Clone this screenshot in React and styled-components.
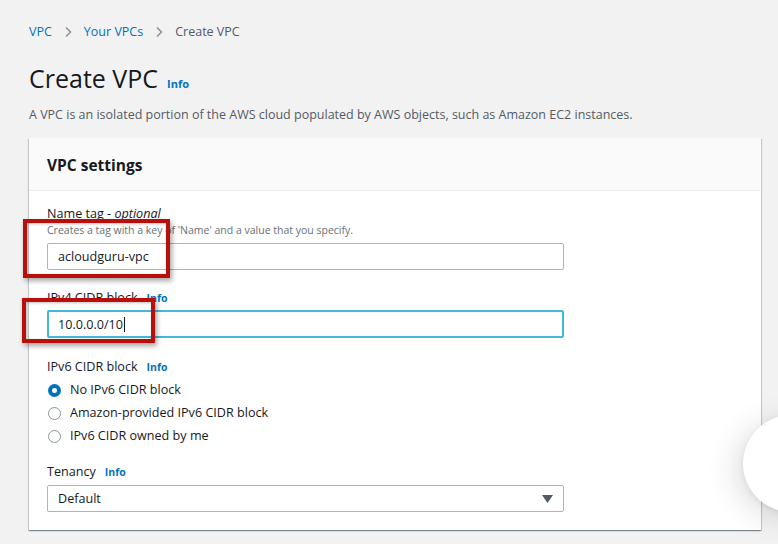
import React from "react";
import styled, { createGlobalStyle } from "styled-components";

const Global = createGlobalStyle`
  html, body { margin: 0; padding: 0; background: #f2f2f2; }
  body { font-family: "Open Sans", "Noto Sans", sans-serif; color: #16191f; overflow: hidden; }
  * { box-sizing: border-box; }
`;

const Page = styled.div`
  position: relative;
  width: 778px;
  height: 544px;
  padding: 23px 17px 0 29px;
  overflow: hidden;
`;

const Crumbs = styled.nav`
  display: flex;
  align-items: center;
  gap: 11px;
  font-size: 12.5px;
  line-height: 18px;
`;

const CrumbLink = styled.span`
  color: #0073bb;
`;

const CrumbCurrent = styled.span`
  color: #545b64;
`;

const Chevron = styled.svg`
  width: 10px;
  height: 12px;
`;

const TitleRow = styled.div`
  display: flex;
  align-items: baseline;
  gap: 9px;
  margin-top: 20px;
`;

const Title = styled.h1`
  margin: 0;
  font-size: 25px;
  font-weight: 400;
  line-height: 34px;
  color: #16191f;
`;

const Info = styled.span`
  color: #0073bb;
  font-weight: 700;
  font-size: ${(p) => p.size || 11}px;
`;

const Desc = styled.p`
  margin: 11px 0 0;
  font-size: 12.5px;
  line-height: 18px;
  color: #545b64;
`;

const Card = styled.section`
  margin-top: 14px;
  background: #fff;
  box-shadow: 0 1px 1px 0 rgba(0, 28, 36, 0.3), 1px 1px 1px 0 rgba(0, 28, 36, 0.15),
    -1px 1px 1px 0 rgba(0, 28, 36, 0.15);
  height: 392px;
`;

const CardHeader = styled.header`
  height: 53px;
  padding: 0 18px;
  display: flex;
  align-items: center;
  background: #fafafa;
  border-bottom: 1px solid #eaeded;
`;

const CardTitle = styled.h2`
  margin: 0;
  font-size: 15.5px;
  font-weight: 700;
  color: #16191f;
  padding-top: 1px;
`;

const CardBody = styled.div`
  padding: 14px 18px 0;
  width: 553px;
`;

const Field = styled.div`
  display: flex;
  flex-direction: column;
  margin-bottom: ${(p) => p.mb || 0}px;
`;

const Label = styled.div`
  display: flex;
  align-items: baseline;
  gap: 9px;
  font-size: 12.6px;
  line-height: 18px;
  color: #16191f;
  em { font-style: italic; }
`;

const Hint = styled.div`
  font-size: 10.5px;
  line-height: 13px;
  color: #687078;
  margin-top: 1px;
`;

const Input = styled.div`
  margin-top: ${(p) => p.mt || 4}px;
  height: ${(p) => (p.focus ? 28 : 27)}px;
  border: ${(p) => (p.focus ? "2px solid #44b9d6" : "1px solid #aab7b8")};
  border-radius: 2px;
  padding: 0 ${(p) => (p.focus ? 9 : 10)}px;
  display: flex;
  align-items: center;
  font-size: 12.6px;
  color: #16191f;
  background: #fff;
`;

const Caret = styled.span`
  display: inline-block;
  width: 1px;
  height: 15px;
  background: #16191f;
  margin-left: 1px;
`;

const Radios = styled.div`
  display: flex;
  flex-direction: column;
  gap: 5px;
  margin-top: 5px;
`;

const RadioRow = styled.label`
  display: flex;
  align-items: center;
  gap: 9px;
  font-size: 12.6px;
  line-height: 18px;
  color: #16191f;
  padding-left: 1px;
`;

const RadioDot = styled.span`
  width: 13px;
  height: 13px;
  border-radius: 50%;
  border: ${(p) => (p.checked ? "4px solid #0073bb" : "1px solid #879596")};
  background: #fff;
  flex: none;
`;

const Select = styled(Input)`
  justify-content: space-between;
  padding-right: 10px;
`;

const Tri = styled.svg`
  width: 11px;
  height: 8px;
`;

const Highlight = styled.div`
  position: absolute;
  left: ${(p) => p.x}px;
  top: ${(p) => p.y}px;
  width: ${(p) => p.w}px;
  height: ${(p) => p.h}px;
  border: 4px solid #b80f0a;
  box-shadow: 2px 3px 5px rgba(0, 0, 0, 0.35), inset 1px 1px 3px rgba(0, 0, 0, 0.25);
  pointer-events: none;
`;

const Bubble = styled.div`
  position: absolute;
  left: 743px;
  top: 415px;
  width: 97px;
  height: 97px;
  border-radius: 50%;
  background: #fff;
  box-shadow: -8px 6px 30px rgba(0, 0, 0, 0.12), 0 2px 6px rgba(0, 0, 0, 0.08);
`;

const ChevronIcon = () => (
  <Chevron viewBox="0 0 10 12">
    <path d="M3 1.5 L7.5 6 L3 10.5" fill="none" stroke="#879596" strokeWidth="1.5" />
  </Chevron>
);

export default function App() {
  return (
    <>
      <Global />
      <Page>
        <Crumbs>
          <CrumbLink>VPC</CrumbLink>
          <ChevronIcon />
          <CrumbLink>Your VPCs</CrumbLink>
          <ChevronIcon />
          <CrumbCurrent>Create VPC</CrumbCurrent>
        </Crumbs>
        <TitleRow>
          <Title>Create VPC</Title>
          <Info>Info</Info>
        </TitleRow>
        <Desc>
          A VPC is an isolated portion of the AWS cloud populated by AWS objects, such as Amazon EC2
          instances.
        </Desc>
        <Card>
          <CardHeader>
            <CardTitle>VPC settings</CardTitle>
          </CardHeader>
          <CardBody>
            <Field mb={19}>
              <Label>
                <span>
                  Name tag - <em>optional</em>
                </span>
              </Label>
              <Hint>Creates a tag with a key of 'Name' and a value that you specify.</Hint>
              <Input mt={6}>acloudguru-vpc</Input>
            </Field>
            <Field mb={20}>
              <Label>
                <span>IPv4 CIDR block</span>
                <Info size={10.5}>Info</Info>
              </Label>
              <Input focus mt={3}>
                10.0.0.0/10
                <Caret />
              </Input>
            </Field>
            <Field mb={18}>
              <Label>
                <span>IPv6 CIDR block</span>
                <Info size={10.5}>Info</Info>
              </Label>
              <Radios>
                <RadioRow>
                  <RadioDot checked />
                  No IPv6 CIDR block
                </RadioRow>
                <RadioRow>
                  <RadioDot />
                  Amazon-provided IPv6 CIDR block
                </RadioRow>
                <RadioRow>
                  <RadioDot />
                  IPv6 CIDR owned by me
                </RadioRow>
              </Radios>
            </Field>
            <Field>
              <Label>
                <span>Tenancy</span>
                <Info size={10.5}>Info</Info>
              </Label>
              <Select mt={4}>
                Default
                <Tri viewBox="0 0 11 8">
                  <path d="M0 0 H11 L5.5 8 Z" fill="#545b64" />
                </Tri>
              </Select>
            </Field>
          </CardBody>
        </Card>
        <Highlight x={23} y={219} w={147} h={59} />
        <Highlight x={22} y={298} w={133} h={45} />
        <Bubble />
      </Page>
    </>
  );
}
